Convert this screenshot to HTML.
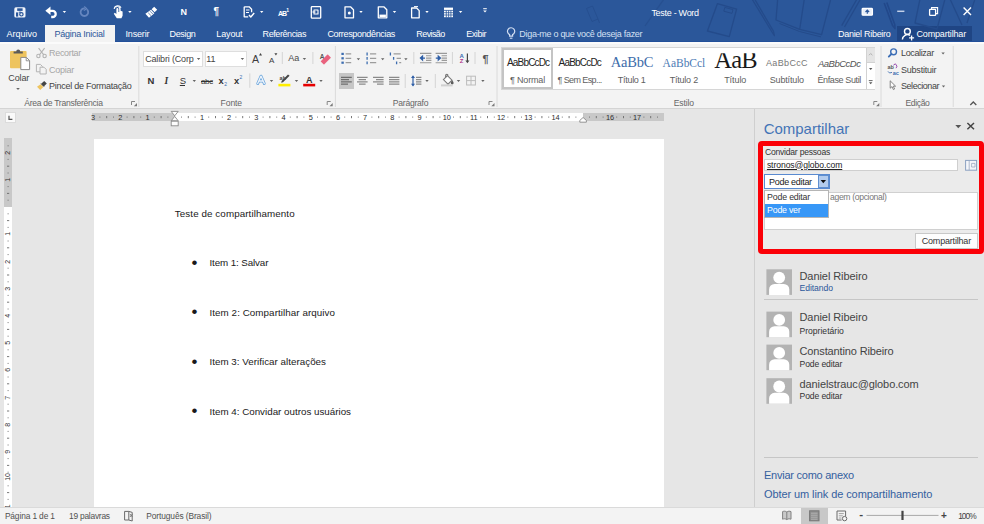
<!DOCTYPE html>
<html lang="pt-BR">
<head>
<meta charset="utf-8">
<title>Teste - Word</title>
<style>
html,body{margin:0;padding:0;}
body{width:984px;height:524px;overflow:hidden;position:relative;background:#e6e6e6;font-family:"Liberation Sans",sans-serif;}
.b{position:absolute;box-sizing:border-box;}
.t{position:absolute;white-space:nowrap;line-height:normal;z-index:3;}
svg{position:absolute;left:0;top:0;z-index:2;}
</style>
</head>
<body>
<!-- title bar + tab row -->
<div class="b" style="left:0;top:0;width:984px;height:42px;background:#2b579a;"></div>
<div class="b" style="left:44.6px;top:25px;width:70.4px;height:18px;background:#f3f3f3;"></div>
<div class="b" style="left:897px;top:26px;width:75px;height:16px;background:#1f4584;"></div>
<div class="b" style="left:0;top:41px;width:984px;height:1px;background:#23509a;"></div>
<div class="b" style="left:44.6px;top:41px;width:70.4px;height:1px;background:#f3f3f3;"></div>
<!-- ribbon -->
<div class="b" style="left:0;top:42px;width:984px;height:66.5px;background:#f3f3f3;border-bottom:1px solid #d4d4d4;"></div>
<div class="b" style="left:0;top:42px;width:984px;height:1.5px;background:#fbfbfb;"></div>
<!-- font boxes -->
<div class="b" style="left:143.4px;top:51.4px;width:59.5px;height:15.6px;background:#fff;border:1px solid #dedede;"></div>
<div class="b" style="left:204.7px;top:51.4px;width:42.3px;height:15.6px;background:#fff;border:1px solid #dedede;"></div>
<!-- align-left selected -->
<div class="b" style="left:338.7px;top:73px;width:15.7px;height:16px;background:#c6c6c6;"></div>
<!-- styles gallery -->
<div class="b" style="left:501.4px;top:46.8px;width:374px;height:43px;background:#fff;border:1px solid #d6d6d6;"></div>
<div class="b" style="left:502px;top:48.2px;width:51.3px;height:40.4px;border:2px solid #c4c4c4;"></div>
<div class="b" style="left:866.2px;top:47.6px;width:9.2px;height:14.6px;background:#e4e4e4;border-left:1px solid #d2d2d2;"></div>
<div class="b" style="left:866.2px;top:62px;width:9.2px;height:13.6px;background:#fff;border:1px solid #d2d2d2;border-right:0;"></div>
<div class="b" style="left:866.2px;top:75.4px;width:9.2px;height:14px;background:#fff;border-left:1px solid #d2d2d2;"></div>
<!-- document page -->
<div class="b" style="left:94.4px;top:139.2px;width:570px;height:368px;background:#fff;"></div>
<!-- horizontal ruler -->
<div class="b" style="left:92.4px;top:113.2px;width:82.3px;height:7.4px;background:#c8c8c8;"></div>
<div class="b" style="left:174.7px;top:113.2px;width:408px;height:7.4px;background:#fff;"></div>
<div class="b" style="left:582.7px;top:113.2px;width:81.7px;height:7.4px;background:#c8c8c8;"></div>
<!-- tab selector -->
<div class="b" style="left:5px;top:112.3px;width:11.3px;height:11px;background:#fafafa;border:1px solid #dcdcdc;"></div>
<!-- vertical ruler -->
<div class="b" style="left:4.2px;top:138.2px;width:7.7px;height:69px;background:#c8c8c8;"></div>
<div class="b" style="left:4.2px;top:207.2px;width:7.7px;height:300.4px;background:#fff;"></div>
<!-- share pane -->
<div class="b" style="left:753.6px;top:109px;width:231px;height:399px;background:#e6e6e6;border-left:1px solid #cfcfcf;"></div>
<div class="b" style="left:757.5px;top:140.5px;width:226.5px;height:113px;border:5.500px solid #fb0007;border-radius:4px;background:#ebebeb;"></div>
<div class="b" style="left:764.4px;top:158.9px;width:194px;height:12.2px;background:#fff;border:1px solid #cfcfcf;"></div>
<div class="b" style="left:764.3px;top:174.2px;width:65.4px;height:15px;background:#fff;border:1px solid #5a8ad0;"></div>
<div class="b" style="left:817.8px;top:175.2px;width:10.9px;height:13px;background:#b3ccee;border:1px solid #5f8fd0;"></div>
<div class="b" style="left:764.4px;top:191.8px;width:213.2px;height:38px;background:#fff;border:1px solid #d0d0d0;"></div>
<div class="b" style="left:914.7px;top:233px;width:63px;height:16.2px;background:#fdfdfd;border:1px solid #c8c8c8;"></div>
<!-- dropdown list -->
<div class="b" style="left:764.4px;top:190px;width:64.8px;height:27.6px;background:#fff;border:1px solid #b5b5b5;z-index:4;"></div>
<div class="b" style="left:765.2px;top:204px;width:63.2px;height:12.9px;background:#3797f7;z-index:4;"></div>
<!-- separators in pane -->
<div class="b" style="left:764.4px;top:298.6px;width:213.2px;height:1px;background:#c6c6c6;"></div>
<div class="b" style="left:763.6px;top:457.3px;width:214.4px;height:1px;background:#c6c6c6;"></div>
<!-- status bar -->
<div class="b" style="left:0;top:507px;width:984px;height:17px;background:#f3f3f3;border-top:1px solid #dadada;"></div>
<div class="b" style="left:800.7px;top:507.5px;width:27.3px;height:16.5px;background:#c8c8c8;"></div>

<svg width="984" height="524" viewBox="0 0 984 524">
<!-- title bar faint decoration -->
<g fill="none" stroke="#244b8b" stroke-width="1.300" stroke-linejoin="round">
<path d="M717.400 3.700l19.200 5.400l-7.300 27.500l-21.900-5.600z"/>
<path d="M724.800 7.400l8.200 2.200l-1 3.800l-8.200-2.200z" stroke-width="1"/>
<path d="M752-1l20 33l2.400 3.600l-1-4.400l-18.800-32.200"/>
<path d="M777.700-1l-1.700 21l23.700 9.300l4.600-30.300M804.300-1l-4.600 30.300l21.900 5.400l9.200-35.700"/>
<path d="M779.500 23.500l20 8l21.500 5.400" stroke-width="1"/>
<path d="M857-1l-15.300 26.600M860.500-1l-16 28"/>
<path d="M884.200 3l8.400 22.600l2.400 3l-.200-3.800l-8-22.400" stroke="#22488a" stroke-width="1.600"/>
<path d="M920-1l-5 24l22 6l8-30" />
<path d="M950-1l12 26M975-1l-8 24"/>
<path d="M586.500 8.500l6-2.500l5.500 13l-6 2.500zM598 19l1.500 4" stroke-width="1" opacity="0.700"/>
<path d="M664-1l-19 27" opacity="0.600"/>
</g>
<!-- QAT icons -->
<g fill="none" stroke="#fff" stroke-width="1.5" stroke-linejoin="round" stroke-linecap="round">
<!-- save/sync -->
<rect x="14.300" y="7.300" width="11.200" height="10.200" rx="1.600" fill="#f2f5fb" stroke="none"/>
<rect x="17.200" y="8.300" width="5.400" height="2.600" fill="#2b579a" stroke="none"/>
<rect x="16" y="12.400" width="2.200" height="4.200" fill="#2b579a" stroke="none"/>
<circle cx="21.400" cy="14.300" r="1.700" stroke="#2b579a" stroke-width="1.200"/>
<path d="M19.200 12.200h1.600" stroke="#2b579a" stroke-width="1"/>
<!-- undo -->
<path d="M45.300 10.800l5.200-4.200v8.400z" fill="#fff" stroke="none"/>
<path d="M50 10.800h2.600a3.100 3.100 0 0 1 0 6.200h-1.400" stroke-width="2.300" stroke-linecap="butt"/>
<!-- redo dim -->
<path d="M87.5 10 a3.8 3.8 0 1 1 -3.5 -1.6" stroke="#6586bf" stroke-width="1.800"/>
<path d="M84.5 6.8 l2.3 1.9 l-2.6 1.6" stroke="#6586bf" stroke-width="1.2"/>
</g>
<g fill="#fff">
<!-- touch hand -->
<path d="M116 7.2 a2.6 2.6 0 0 1 4.6 1.6 v2 l2 .8 v4.2 l-1.2 2.4 h-4.6 l-3 -4.4 l1 -1 l1.6 1.2 v-5 a1 1 0 0 1 2 0 v3 h.8 v-3.4 a1.8 1.8 0 0 0 -3.4 -.6z"/>
<path d="M114.2 8.8 a3.6 3.6 0 0 1 6.8 -1" fill="none" stroke="#fff" stroke-width="1.2"/>
<!-- format painter -->
<path d="M154.200 6.800l3 3l-2.600 2.400l-3-3z"/>
<path d="M151 9.800l3.400 3.400l-5.400 4.600l-3.600-4z"/>
<path d="M148.200 12.800l2.800 2.800M150 11.200l2.800 2.800" stroke="#2b579a" stroke-width="0.700"/>
<!-- dropdown arrows -->
<path d="M62.7 11h3.4l-1.7 2z"/>
<path d="M128.2 11h3.4l-1.7 2z"/>
<path d="M260 11h3.4l-1.7 2z"/>
<path d="M359.3 11h3.4l-1.7 2z"/>
<path d="M392.8 11h3.4l-1.7 2z"/>
<path d="M425.3 11h3.4l-1.7 2z"/>
<path d="M458.9 11h3.4l-1.7 2z"/>
<path d="M483.2 8.2h3.6v1h-3.6z"/><path d="M483.2 10.4h3.6l-1.8 2.2z"/>
</g>
<g fill="none" stroke="#fff" stroke-width="1.3" stroke-linejoin="round">
<!-- doc with check -->
<path d="M244.2 6.8 h5 l2.4 2.4 v3 M244.2 6.8 v10 h4"/>
<path d="M246 10h3.5M246 12.5h3" stroke-width="1"/>
<path d="M249 15 l1.8 2 l3.4 -4" stroke-width="1.4"/>
<!-- box icon -->
<rect x="311.3" y="6.6" width="9.4" height="11.6" rx="0.8"/>
<rect x="314" y="10" width="4" height="4" stroke-width="1.1"/>
<path d="M312.5 12h3" stroke-width="1.1"/>
<!-- doc icons -->
<path d="M345 6.8 h5.5 l3 3 v8 h-8.5z"/>
<circle cx="349.3" cy="13" r="1.5" fill="#fff" stroke="none"/>
<path d="M378.3 6.8 h5.5 l3 3 v8 h-8.5z"/>
<path d="M379.5 15.8 h6.4" stroke-width="2.4"/>
<path d="M411.6 8 h5 l2.6 2.6 v7.2 h-7.6z"/>
<path d="M414 6.6 h4" stroke-width="1"/>
<!-- table -->
<rect x="444" y="7.6" width="9" height="9.6" fill="#fff" stroke="none"/>
</g>
<g stroke="#2b579a" stroke-width="0.8">
<path d="M444 10.4h9M444 12.7h9M444 15h9M446.3 10.4v7M448.6 10.4v7M450.9 10.4v7"/>
</g>
<text x="286.3" y="11.5" font-family="Liberation Sans, sans-serif" font-size="5" font-weight="bold" fill="#fff">1</text>
<!-- window controls -->
<g fill="none" stroke="#fff" stroke-width="1.3">
<rect x="862.200" y="8.400" width="10.200" height="6.800" rx="0.800" fill="#e8eef8"/>
<path d="M867.300 10.200v3.600M865.500 12l1.800-1.800l1.800 1.800" stroke="#2b579a" stroke-width="1.200"/>
<path d="M897.200 11.300h7.200" stroke="#c3d0e8" stroke-width="1.500"/>
<rect x="929.6" y="9.4" width="6" height="6" rx="0.6"/>
<path d="M931.6 9.4v-1.8h6v6h-2" stroke-width="1.1"/>
<path d="M963.6 7.6l7.4 7.4M971 7.6l-7.4 7.4" stroke-width="1.4"/>
</g>
<!-- lightbulb -->
<g fill="none" stroke="#d5e0f3" stroke-width="1.2">
<path d="M509.6 36.2 v-1.6 a3.6 3.6 0 1 1 3 0 v1.6z"/>
<path d="M509.8 38.2h2.6" stroke-width="1.1"/>
</g>
<!-- share person icon -->
<g fill="none" stroke="#fff" stroke-width="1.4">
<circle cx="907.4" cy="31.4" r="2.9"/>
<path d="M902.4 39.6 a5 5 0 0 1 7.6 -4.2"/>
<path d="M911.6 35.4v5M909.1 37.9h5" stroke-width="1.3"/>
</g>
<!-- ===== ribbon: group separators ===== -->
<g stroke="#dadada" stroke-width="1">
<path d="M138.8 46v61M335.4 46v61M497 46v61M881 46v61M953.2 46v61"/>
<path d="M249.8 73.4v14.4M282.3 52v12M312.9 52v12M413.8 52v12M452.4 52v12M475 52v12M405.2 74v14M435.3 74v14" stroke="#d4d4d4"/>
</g>
<!-- dialog launchers -->
<g fill="none" stroke="#7a7a7a" stroke-width="0.9">
<path d="M131.5 105v-3.5h3.5M327.2 105v-3.5h3.5M489 105v-3.5h3.5M873.8 105v-3.5h3.5"/>
</g>
<g fill="#7a7a7a"><path d="M137 106.2h-3.2l3.2-3.2zM332.7 106.2h-3.2l3.2-3.2zM494.5 106.2h-3.2l3.2-3.2zM879.3 106.2h-3.2l3.2-3.2z"/></g>
<!-- collapse chevron -->
<path d="M970.3 105l3-3l3 3" fill="none" stroke="#555" stroke-width="1.3"/>
<!-- clipboard -->
<rect x="10" y="51" width="16.6" height="17.2" rx="1" fill="#eec45f"/>
<path d="M13.6 53.4 v-2 h2.6 a2 2 0 0 1 4 0 h2.6 v2z" fill="#5a5a5a"/>
<path d="M20.8 57.4 h5.6 l3.2 3.2 v9 h-8.8z" fill="#fff" stroke="#8a8a8a" stroke-width="1"/>
<path d="M26.2 57.6 v3.2 h3.2" fill="none" stroke="#8a8a8a" stroke-width="0.9"/>
<path d="M16.2 88h3.6l-1.8 2.1z" fill="#666"/>
<!-- scissors (disabled) -->
<g fill="none" stroke="#b4b4b4" stroke-width="1.1">
<path d="M38.6 48.2l5.4 7M44.6 48.2l-5.4 7"/>
<circle cx="38.4" cy="56" r="1.7"/><circle cx="44.6" cy="56" r="1.7"/>
</g>
<!-- copy (disabled) -->
<g fill="#f3f3f3" stroke="#b4b4b4" stroke-width="1">
<path d="M36.4 64.4h4l2 2v5.4h-6z"/>
<path d="M40 67.2h4l2.2 2.2v4.6h-6.2z"/>
</g>
<!-- format painter -->
<path d="M44.2 81l2.6 2.4l-3 3l-2.6-2.6z" fill="#444"/>
<path d="M40.6 84.2l2.8 2.8l-3.2 3l-3.2-3.2z" fill="#eec45f"/>
<path d="M41 83.6l3 3" stroke="#444" stroke-width="1"/>
<!-- font combos arrows -->
<g fill="#666">
<path d="M196.9 58h3.4l-1.7 2zM240.7 58h3.4l-1.7 2z"/>
<path d="M192.6 80h3.4l-1.7 2z"/>
<path d="M302.7 58h3.4l-1.7 2z"/>
<path d="M269.8 80h3.4l-1.7 2zM294.8 80h3.4l-1.7 2zM319.3 80h3.4l-1.7 2z"/>
<path d="M356.7 58.2h3.4l-1.7 2zM381 58.2h3.4l-1.7 2zM404.2 58.2h3.4l-1.7 2z"/>
<path d="M425.3 80h3.4l-1.7 2zM456.8 80h3.4l-1.7 2zM481.2 80h3.4l-1.7 2z"/>
<path d="M941.4 52.4h3.4l-1.7 2zM941.8 85.4h3.4l-1.7 2z"/>
</g>
<!-- grow / shrink font markers -->
<path d="M259 55.400h3l-1.500-2.300z" fill="#444"/>
<path d="M274.400 53.200h3l-1.500 2.300z" fill="#444"/>
<!-- subscript / superscript marks -->
<text x="224.2" y="86" font-family="Liberation Sans, sans-serif" font-size="5" fill="#3c6db0">2</text>
<text x="239.6" y="79" font-family="Liberation Sans, sans-serif" font-size="5" fill="#3c6db0">2</text>
<!-- clear formatting -->
<text x="319.8" y="58.6" font-family="Liberation Sans, sans-serif" font-size="6.5" font-weight="bold" fill="#555">A</text>
<rect x="-2.400" y="-5" width="4.800" height="10" rx="0.600" transform="translate(325.800 59.500) rotate(45)" fill="#e9627e"/>
<!-- text effects A -->
<path d="M257.700 83.600l3.300-7.500l3.300 7.500M259.200 81h3.600" fill="none" stroke="#6aa5dc" stroke-width="2.800" stroke-linejoin="round" stroke-linecap="round"/>
<path d="M257.700 83.600l3.300-7.500l3.300 7.500M259.200 81h3.600" fill="none" stroke="#eef4fb" stroke-width="1.300" stroke-linejoin="round" stroke-linecap="round"/>
<!-- highlighter -->
<rect x="278.4" y="83.8" width="12" height="2.6" fill="#ffee00"/>
<path d="M289.6 75.8l-6.6 6.4l-1.8.6l.4-1.8l6.4-6.4z" fill="#444"/>
<text x="279.6" y="80" font-family="Liberation Sans, sans-serif" font-size="5.5" font-weight="bold" fill="#444">ab</text>
<!-- font color bar -->
<rect x="303.2" y="83.8" width="12" height="2.6" fill="#e60000"/>
<!-- bullets -->
<g fill="#3c6db0"><rect x="341.4" y="52.8" width="2.4" height="2.2"/><rect x="341.4" y="57.2" width="2.4" height="2.2"/><rect x="341.4" y="61.6" width="2.4" height="2.2"/></g>
<g stroke="#9c9c9c" stroke-width="1.2"><path d="M345.6 53.9h5.6M345.6 58.3h5.6M345.6 62.7h5.6"/>
<path d="M370 53.9h6.2M370 58.3h6.2M370 62.7h6.2"/>
<path d="M393.6 53.9h7M396.6 58.3h4.4M399.2 62.7h2"/></g>
<g stroke="#3c6db0" stroke-width="1.3"><path d="M367.1 52.6v2.8M367.1 57v2.8M367.1 61.4v2.8"/>
<path d="M390.4 52.6v2.8M393.6 57v2.8M396.6 61.4v2.8" /></g>
<!-- indent icons -->
<g stroke="#9a9a9a" stroke-width="1.1">
<path d="M420 53.4h11.4M420 62.8h11.4M426 55.8h5.4M426 58.1h5.4M426 60.4h5.4"/>
<path d="M435.6 53.4h11.4M435.6 62.8h11.4M441.6 55.8h5.4M441.6 58.1h5.4M441.6 60.4h5.4"/>
</g>
<path d="M425 58.100h-3.600M422.600 56l-2.300 2.100l2.300 2.100z" fill="#2e5ea6" stroke="#2e5ea6" stroke-width="1.100"/>
<path d="M435.800 58.100h3.600M438.200 56l2.300 2.100l-2.300 2.100z" fill="#2e5ea6" stroke="#2e5ea6" stroke-width="1.100"/>
<!-- sort -->
<text x="459.6" y="57.6" font-family="Liberation Sans, sans-serif" font-size="6" font-weight="bold" fill="#3c6db0">A</text>
<text x="459.8" y="63.4" font-family="Liberation Sans, sans-serif" font-size="6" font-weight="bold" fill="#b0358c">Z</text>
<path d="M467.4 53.6v7.6" stroke="#444" stroke-width="1.2"/><path d="M465.4 60.4h4l-2 2.8z" fill="#444"/>
<!-- alignment icons -->
<g stroke="#8a8a8a" stroke-width="1.2">
<path d="M341 77.3h10.8M341 79.6h8M341 81.9h10.8M341 84.2h7" stroke="#6e6e6e"/>
<path d="M357 77.3h10.6M358.6 79.6h7.4M357 81.9h10.6M359 84.2h6.6"/>
<path d="M373 77.3h10.6M376 79.6h7.6M373 81.9h10.6M377 84.2h6.6"/>
<path d="M389 77.3h10.4M389 79.6h10.4M389 81.9h10.4M389 84.2h10.4"/>
<path d="M416 77.3h5.4M416 79.6h5.4M416 81.9h5.4M416 84.2h5.4"/>
</g>
<!-- line spacing arrows -->
<path d="M413 76.4v9" stroke="#2e5ea6" stroke-width="1.2"/>
<path d="M411 78h4l-2-2.8zM411 83.8h4l-2 2.8z" fill="#2e5ea6"/>
<!-- shading bucket -->
<g fill="none" stroke="#7a7a7a" stroke-width="1.1">
<path d="M443.4 79.6l4-4l4.6 4.6l-4 4z" fill="#fff"/>
<path d="M445.6 77.4v-1.8a1.2 1.2 0 0 1 2.4 0"/>
</g>
<path d="M452.2 80.2c.9 1.3 1.4 2.1 1.4 2.8a1.4 1.4 0 0 1-2.8 0c0-.7.5-1.5 1.400-2.8z" fill="#5a5a5a"/>
<rect x="441" y="84.4" width="11.6" height="2" fill="#d0d0d0"/>
<!-- borders -->
<g fill="none" stroke="#bcbcbc" stroke-width="1"><rect x="466.6" y="76.2" width="8.8" height="8.8"/><path d="M471 76.2v8.8M466.6 80.6h8.8"/></g>
<!-- gallery scroll arrows -->
<path d="M869 55.2l1.7-1.7l1.700 1.700" fill="none" stroke="#b0b0b0" stroke-width="1"/>
<path d="M869 68h3.400l-1.700 2z" fill="#555"/>
<path d="M868.800 80.600h3.800" stroke="#555" stroke-width="0.9"/><path d="M869 82.200h3.400l-1.700 2z" fill="#555"/>
<!-- find -->
<circle cx="893.600" cy="51.800" r="2.900" fill="none" stroke="#3b6db5" stroke-width="1.400"/>
<path d="M891.400 54l-2.600 2.600" stroke="#3b6db5" stroke-width="1.800" stroke-linecap="round"/>
<!-- replace -->
<text x="887.400" y="69.200" font-family="Liberation Sans, sans-serif" font-size="5.500" font-weight="bold" fill="#555">ab</text>
<text x="892.800" y="74.600" font-family="Liberation Sans, sans-serif" font-size="5.500" font-weight="bold" fill="#3c6db0">ac</text>
<path d="M893.400 65.200l2-1.400l1.600 2.400l-1 2" fill="none" stroke="#9a4fb0" stroke-width="1"/>
<path d="M888 71.400l1.600 1.600l2.400-.6" fill="none" stroke="#3c6db0" stroke-width="0.900"/>
<!-- select cursor -->
<path d="M890.200 80.800v7.400l1.800-1.600l1.400 3l1.200-.6l-1.400-2.800h2.400z" fill="#fdfdfd" stroke="#777" stroke-width="0.900" stroke-linejoin="round"/>
<!-- tab selector L -->
<path d="M9 115.8v3.600h3.400" fill="none" stroke="#555" stroke-width="1.200"/>
<!-- indent markers -->
<g fill="#fdfdfd" stroke="#8a8a8a" stroke-width="0.900">
<path d="M171.200 111.400h7l-3.500 4.400z"/>
<path d="M171.200 120.800l3.500-4.400l3.500 4.400z"/>
<rect x="171.200" y="121.200" width="7" height="4.600"/>
<path d="M579.800 122.200v-1.800l3.300-2.900l3.300 2.900v1.800z"/>
</g>
<!-- avatars -->
<rect x="766.4" y="269.3" width="25.6" height="25.6" fill="#b3b3b3"/>
<circle cx="779.2" cy="277.6" r="5.9" fill="#fff"/>
<path d="M769.1 294.9v-5.500a5.500 5.500 0 0 1 5.500-5.500h9.200a5.500 5.500 0 0 1 5.500 5.500v5.500z" fill="#fff"/>
<rect x="766.4" y="311.6" width="25.6" height="25.6" fill="#b3b3b3"/>
<circle cx="779.2" cy="319.9" r="5.9" fill="#fff"/>
<path d="M769.1 337.2v-5.500a5.500 5.500 0 0 1 5.500-5.500h9.200a5.500 5.500 0 0 1 5.500 5.500v5.500z" fill="#fff"/>
<rect x="766.4" y="344.6" width="25.6" height="25.6" fill="#b3b3b3"/>
<circle cx="779.2" cy="352.9" r="5.9" fill="#fff"/>
<path d="M769.1 370.2v-5.500a5.500 5.500 0 0 1 5.500-5.500h9.200a5.500 5.500 0 0 1 5.500 5.500v5.500z" fill="#fff"/>
<rect x="766.4" y="378.2" width="25.6" height="25.6" fill="#b3b3b3"/>
<circle cx="779.2" cy="386.5" r="5.9" fill="#fff"/>
<path d="M769.1 403.8v-5.500a5.500 5.500 0 0 1 5.500-5.500h9.200a5.500 5.500 0 0 1 5.500 5.500v5.500z" fill="#fff"/>
<!-- pane header icons -->
<path d="M955.300 125h6l-3 3.200z" fill="#555"/>
<path d="M967.400 123l6.600 6.200M974 123l-6.600 6.200" stroke="#444" stroke-width="1.500" fill="none"/>
<!-- address book -->
<rect x="965.600" y="160.400" width="11" height="9.800" fill="#f4f6fa" stroke="#8aa0c0" stroke-width="1"/>
<path d="M969.200 160.400v9.800M971.600 163.400h3.400v3.600h-3.400z" fill="none" stroke="#9aa8bf" stroke-width="0.800"/>
<!-- combo arrow -->
<path d="M820.600 180h5.400l-2.700 3.200z" fill="#111"/>
<!-- status bar icons -->
<g fill="none" stroke="#6a6a6a" stroke-width="1">
<path d="M124.600 511.400h4.200v8.600h-4.200zM128.800 511.400l3.400 1v8.600l-3.400-1"/>
<path d="M130 514l2.400 3M132.400 514l-2.400 3" stroke-width="0.800"/>
<path d="M782.600 511.600c1.400-.6 2.800-.6 4.200.4c1.400-1 2.800-1 4.200-.4v7.600c-1.400-.6-2.800-.6-4.200.4c-1.400-1-2.800-1-4.200-.4zM786.800 512v7.600" fill="#c9c9c9" stroke="#808080"/>
<rect x="809.600" y="510.800" width="9.400" height="10" fill="#8e8e8e" stroke="#777"/>
<path d="M837 511h8.600v5M837 511v9h4.600"/>
<path d="M838.800 513.600h5M838.800 515.800h4M838.800 518h2.600" stroke-width="0.800" stroke="#8a8a8a"/>
<circle cx="844.600" cy="518.600" r="2.200" fill="#f3f3f3"/>
</g>
<path d="M811 513.200h6.600M811 515.200h6.600M811 517.200h6.600M811 519.200h6.600" stroke="#bdbdbd" stroke-width="0.800"/>
<path d="M866.500 515.400h72" stroke="#a8a8a8" stroke-width="1"/>
<rect x="901.400" y="510.800" width="2.200" height="9.200" fill="#444"/>
<path d="M99.9 116.6v1M106.7 116v2.2M113.5 116.6v1M127.1 116.6v1M133.9 116v2.2M140.7 116.6v1M154.3 116.6v1M161.1 116v2.2M167.9 116.6v1M181.5 116.6v1M188.3 116v2.2M195.1 116.6v1M208.7 116.6v1M215.5 116v2.2M222.3 116.6v1M235.9 116.6v1M242.7 116v2.2M249.5 116.6v1M263.1 116.6v1M269.9 116v2.2M276.7 116.6v1M290.3 116.6v1M297.1 116v2.2M303.9 116.6v1M317.5 116.6v1M324.3 116v2.2M331.1 116.6v1M344.7 116.6v1M351.5 116v2.2M358.3 116.6v1M371.9 116.6v1M378.7 116v2.2M385.5 116.6v1M399.1 116.6v1M405.9 116v2.2M412.7 116.6v1M426.3 116.6v1M433.1 116v2.2M439.9 116.6v1M453.5 116.6v1M460.3 116v2.2M467.1 116.6v1M480.7 116.6v1M487.5 116v2.2M494.3 116.6v1M507.9 116.6v1M514.7 116v2.2M521.5 116.6v1M535.1 116.6v1M541.9 116v2.2M548.7 116.6v1M562.3 116.6v1M569.1 116v2.2M575.9 116.6v1M589.5 116.6v1M596.3 116v2.2M603.1 116.6v1M616.7 116.6v1M623.5 116v2.2M630.3 116.6v1M643.9 116.6v1M650.7 116v2.2M657.5 116.6v1" stroke="#6a6a6a" stroke-width="0.9" fill="none"/><path d="M7.6 145.8h1M7.6 159.4h1M7 166.2h2.2M7.6 173.0h1M7.6 186.6h1M7 193.4h2.2M7.6 200.2h1M7.6 213.8h1M7 220.6h2.2M7.6 227.4h1M7.6 241.0h1M7 247.8h2.2M7.6 254.6h1M7.6 268.2h1M7 275.0h2.2M7.6 281.8h1M7.6 295.4h1M7 302.2h2.2M7.6 309.0h1M7.6 322.6h1M7 329.4h2.2M7.6 336.2h1M7.6 349.8h1M7 356.6h2.2M7.6 363.4h1M7.6 377.0h1M7 383.8h2.2M7.6 390.6h1M7.6 404.2h1M7 411.0h2.2M7.6 417.8h1M7.6 431.4h1M7 438.2h2.2M7.6 445.0h1M7.6 458.6h1M7 465.4h2.2M7.6 472.2h1M7.6 485.8h1M7 492.6h2.2M7.6 499.4h1" stroke="#6a6a6a" stroke-width="0.9" fill="none"/>
</svg>
<div class="b" style="left:0;top:139px;width:20px;height:368.4px;overflow:hidden;z-index:3;"><span class="t" style="left:4.3px;top:364.5px;font-size:7px;color:#3a3a3a;transform:rotate(-90deg);transform-origin:3.9px 3.83px;">11</span></div>
<span class="t" style="left:651.4px;top:7.76px;font-size:9px;color:#fff;font-family:'Liberation Sans', sans-serif;letter-spacing:-0.288px;">Teste - Word</span>
<span class="t" style="left:6.5px;top:28.86px;font-size:9px;color:#fff;font-family:'Liberation Sans', sans-serif;letter-spacing:-0.002px;">Arquivo</span>
<span class="t" style="left:125.5px;top:28.86px;font-size:9px;color:#fff;font-family:'Liberation Sans', sans-serif;letter-spacing:-0.174px;">Inserir</span>
<span class="t" style="left:169.5px;top:28.86px;font-size:9px;color:#fff;font-family:'Liberation Sans', sans-serif;letter-spacing:-0.336px;">Design</span>
<span class="t" style="left:216.3px;top:28.86px;font-size:9px;color:#fff;font-family:'Liberation Sans', sans-serif;letter-spacing:-0.139px;">Layout</span>
<span class="t" style="left:262.6px;top:28.86px;font-size:9px;color:#fff;font-family:'Liberation Sans', sans-serif;letter-spacing:-0.421px;">Referências</span>
<span class="t" style="left:327.4px;top:28.86px;font-size:9px;color:#fff;font-family:'Liberation Sans', sans-serif;letter-spacing:-0.340px;">Correspondências</span>
<span class="t" style="left:416.3px;top:28.86px;font-size:9px;color:#fff;font-family:'Liberation Sans', sans-serif;letter-spacing:-0.588px;">Revisão</span>
<span class="t" style="left:466.3px;top:28.86px;font-size:9px;color:#fff;font-family:'Liberation Sans', sans-serif;letter-spacing:-0.469px;">Exibir</span>
<span class="t" style="left:54.5px;top:28.86px;font-size:9px;color:#2b579a;font-family:'Liberation Sans', sans-serif;letter-spacing:-0.253px;">Página Inicial</span>
<span class="t" style="left:519.3px;top:28.86px;font-size:9px;color:#d5e0f3;font-family:'Liberation Sans', sans-serif;letter-spacing:-0.293px;">Diga-me o que você deseja fazer</span>
<span class="t" style="left:838.0px;top:28.86px;font-size:9px;color:#fff;font-family:'Liberation Sans', sans-serif;letter-spacing:-0.288px;">Daniel Ribeiro</span>
<span class="t" style="left:916.5px;top:28.86px;font-size:9px;color:#fff;font-family:'Liberation Sans', sans-serif;letter-spacing:-0.169px;">Compartilhar</span>
<span class="t" style="left:180.5px;top:7.16px;font-size:9px;color:#fff;font-family:'Liberation Sans', sans-serif;letter-spacing:0.500px;font-weight:bold;">N</span>
<span class="t" style="left:213.5px;top:6.35px;font-size:10px;color:#fff;font-family:'Liberation Sans', sans-serif;letter-spacing:1.238px;font-weight:bold;">¶</span>
<span class="t" style="left:278.0px;top:9.66px;font-size:7px;color:#fff;font-family:'Liberation Sans', sans-serif;letter-spacing:-1.062px;font-weight:bold;">AB</span>
<span class="t" style="left:8.3px;top:72.86px;font-size:9px;color:#444;font-family:'Liberation Sans', sans-serif;letter-spacing:-0.123px;">Colar</span>
<span class="t" style="left:49.0px;top:48.25px;font-size:9px;color:#a6a6a6;font-family:'Liberation Sans', sans-serif;letter-spacing:-0.314px;">Recortar</span>
<span class="t" style="left:49.0px;top:65.26px;font-size:9px;color:#a6a6a6;font-family:'Liberation Sans', sans-serif;letter-spacing:-0.253px;">Copiar</span>
<span class="t" style="left:49.0px;top:80.86px;font-size:9px;color:#444;font-family:'Liberation Sans', sans-serif;letter-spacing:-0.247px;">Pincel de Formatação</span>
<span class="t" style="left:24.2px;top:97.92px;font-size:8.6px;color:#666;font-family:'Liberation Sans', sans-serif;letter-spacing:-0.289px;">Área de Transferência</span>
<span class="t" style="left:145.2px;top:54.36px;font-size:9px;color:#444;font-family:'Liberation Sans', sans-serif;letter-spacing:-0.163px;">Calibri (Corp</span>
<span class="t" style="left:206.2px;top:54.36px;font-size:9px;color:#444;font-family:'Liberation Sans', sans-serif;letter-spacing:-0.072px;">11</span>
<span class="t" style="left:147.4px;top:75.20px;font-size:9.5px;color:#333;font-family:'Liberation Sans', sans-serif;letter-spacing:0.225px;font-weight:bold;">N</span>
<span class="t" style="left:164.5px;top:76.14px;font-size:9.5px;color:#333;font-family:'Liberation Serif', serif;letter-spacing:0.297px;font-style:italic;font-weight:bold;">I</span>
<span class="t" style="left:179.8px;top:75.00px;font-size:9.5px;color:#333;font-family:'Liberation Sans', sans-serif;letter-spacing:-1.144px;text-decoration:underline;">S</span>
<span class="t" style="left:201.0px;top:76.56px;font-size:8px;color:#333;font-family:'Liberation Sans', sans-serif;letter-spacing:-0.369px;text-decoration:line-through;">abc</span>
<span class="t" style="left:218.5px;top:75.29px;font-size:9.4px;color:#333;font-family:'Liberation Sans', sans-serif;letter-spacing:-0.419px;font-weight:bold;">x</span>
<span class="t" style="left:234.0px;top:75.29px;font-size:9.4px;color:#333;font-family:'Liberation Sans', sans-serif;letter-spacing:-0.419px;font-weight:bold;">x</span>
<span class="t" style="left:252.1px;top:53.21px;font-size:10.6px;color:#3c3c3c;font-family:'Liberation Sans', sans-serif;letter-spacing:0.522px;">A</span>
<span class="t" style="left:269.0px;top:55.56px;font-size:8px;color:#3c3c3c;font-family:'Liberation Sans', sans-serif;letter-spacing:0.656px;">A</span>
<span class="t" style="left:288.2px;top:53.36px;font-size:9px;color:#4a4a4a;font-family:'Liberation Sans', sans-serif;letter-spacing:0.092px;">Aa</span>
<span class="t" style="left:306.0px;top:75.06px;font-size:9px;color:#333;font-family:'Liberation Sans', sans-serif;letter-spacing:0.100px;font-weight:bold;">A</span>
<span class="t" style="left:220.6px;top:97.92px;font-size:8.6px;color:#666;font-family:'Liberation Sans', sans-serif;letter-spacing:-0.117px;">Fonte</span>
<span class="t" style="left:392.8px;top:97.92px;font-size:8.6px;color:#666;font-family:'Liberation Sans', sans-serif;letter-spacing:-0.250px;">Parágrafo</span>
<span class="t" style="left:482.4px;top:53.05px;font-size:11px;color:#555;font-family:'Liberation Sans', sans-serif;letter-spacing:0.975px;font-weight:bold;">¶</span>
<span class="t" style="left:673.7px;top:97.92px;font-size:8.6px;color:#666;font-family:'Liberation Sans', sans-serif;letter-spacing:-0.136px;">Estilo</span>
<span class="t" style="left:905.5px;top:98.02px;font-size:8.6px;color:#666;font-family:'Liberation Sans', sans-serif;letter-spacing:-0.397px;">Edição</span>
<span class="t" style="left:507.0px;top:57.25px;font-size:10px;color:#222;font-family:'Liberation Sans', sans-serif;letter-spacing:-0.826px;">AaBbCcDc</span>
<span class="t" style="left:510.0px;top:75.26px;font-size:9px;color:#606060;font-family:'Liberation Sans', sans-serif;letter-spacing:-0.168px;">¶ Normal</span>
<span class="t" style="left:558.6px;top:57.25px;font-size:10px;color:#222;font-family:'Liberation Sans', sans-serif;letter-spacing:-0.813px;">AaBbCcDc</span>
<span class="t" style="left:557.6px;top:75.26px;font-size:9px;color:#606060;font-family:'Liberation Sans', sans-serif;letter-spacing:-0.605px;">¶ Sem Esp...</span>
<span class="t" style="left:610.7px;top:54.38px;font-size:14.5px;color:#3d6caa;font-family:'Liberation Serif', serif;letter-spacing:-0.180px;">AaBbC</span>
<span class="t" style="left:617.8px;top:75.26px;font-size:9px;color:#606060;font-family:'Liberation Sans', sans-serif;letter-spacing:-0.289px;">Título 1</span>
<span class="t" style="left:662.6px;top:56.75px;font-size:11.5px;color:#4c7ab5;font-family:'Liberation Serif', serif;letter-spacing:-0.016px;">AaBbCcl</span>
<span class="t" style="left:669.7px;top:75.26px;font-size:9px;color:#606060;font-family:'Liberation Sans', sans-serif;letter-spacing:-0.214px;">Título 2</span>
<span class="t" style="left:714.2px;top:45.77px;font-size:24.5px;color:#1a1a1a;font-family:'Liberation Serif', serif;letter-spacing:-0.707px;clip-path:inset(7.5px 0 0 0);">AaB</span>
<span class="t" style="left:724.2px;top:75.26px;font-size:9px;color:#606060;font-family:'Liberation Sans', sans-serif;letter-spacing:-0.069px;">Título</span>
<span class="t" style="left:765.9px;top:58.45px;font-size:9px;color:#777;font-family:'Liberation Sans', sans-serif;letter-spacing:0.369px;">AaBbCcC</span>
<span class="t" style="left:769.7px;top:75.26px;font-size:9px;color:#606060;font-family:'Liberation Sans', sans-serif;letter-spacing:-0.148px;">Subtítulo</span>
<span class="t" style="left:818.0px;top:57.90px;font-size:9.5px;color:#555;font-family:'Liberation Sans', sans-serif;letter-spacing:-0.509px;font-style:italic;">AaBbCcDc</span>
<span class="t" style="left:817.4px;top:75.16px;font-size:9px;color:#606060;font-family:'Liberation Sans', sans-serif;letter-spacing:-0.369px;">Ênfase Sutil</span>
<span class="t" style="left:901.0px;top:48.16px;font-size:9px;color:#444;font-family:'Liberation Sans', sans-serif;letter-spacing:-0.359px;">Localizar</span>
<span class="t" style="left:901.0px;top:64.86px;font-size:9px;color:#444;font-family:'Liberation Sans', sans-serif;letter-spacing:-0.213px;">Substituir</span>
<span class="t" style="left:901.0px;top:81.06px;font-size:9px;color:#444;font-family:'Liberation Sans', sans-serif;letter-spacing:-0.453px;">Selecionar</span>
<span class="t" style="left:91.1px;top:113.20px;font-size:7.4px;color:#2e2e2e;font-family:'Liberation Sans', sans-serif;letter-spacing:-0.125px;">3</span>
<span class="t" style="left:118.3px;top:113.20px;font-size:7.4px;color:#2e2e2e;font-family:'Liberation Sans', sans-serif;letter-spacing:-0.125px;">2</span>
<span class="t" style="left:145.5px;top:113.20px;font-size:7.4px;color:#2e2e2e;font-family:'Liberation Sans', sans-serif;letter-spacing:-0.125px;">1</span>
<span class="t" style="left:199.9px;top:113.20px;font-size:7.4px;color:#2e2e2e;font-family:'Liberation Sans', sans-serif;letter-spacing:-0.125px;">1</span>
<span class="t" style="left:227.1px;top:113.20px;font-size:7.4px;color:#2e2e2e;font-family:'Liberation Sans', sans-serif;letter-spacing:-0.125px;">2</span>
<span class="t" style="left:254.3px;top:113.20px;font-size:7.4px;color:#2e2e2e;font-family:'Liberation Sans', sans-serif;letter-spacing:-0.125px;">3</span>
<span class="t" style="left:281.5px;top:113.20px;font-size:7.4px;color:#2e2e2e;font-family:'Liberation Sans', sans-serif;letter-spacing:-0.125px;">4</span>
<span class="t" style="left:308.7px;top:113.20px;font-size:7.4px;color:#2e2e2e;font-family:'Liberation Sans', sans-serif;letter-spacing:-0.125px;">5</span>
<span class="t" style="left:335.9px;top:113.20px;font-size:7.4px;color:#2e2e2e;font-family:'Liberation Sans', sans-serif;letter-spacing:-0.125px;">6</span>
<span class="t" style="left:363.1px;top:113.20px;font-size:7.4px;color:#2e2e2e;font-family:'Liberation Sans', sans-serif;letter-spacing:-0.125px;">7</span>
<span class="t" style="left:390.3px;top:113.20px;font-size:7.4px;color:#2e2e2e;font-family:'Liberation Sans', sans-serif;letter-spacing:-0.125px;">8</span>
<span class="t" style="left:417.5px;top:113.20px;font-size:7.4px;color:#2e2e2e;font-family:'Liberation Sans', sans-serif;letter-spacing:-0.125px;">9</span>
<span class="t" style="left:442.7px;top:113.20px;font-size:7.4px;color:#2e2e2e;font-family:'Liberation Sans', sans-serif;letter-spacing:-0.117px;">10</span>
<span class="t" style="left:469.9px;top:113.20px;font-size:7.4px;color:#2e2e2e;font-family:'Liberation Sans', sans-serif;letter-spacing:0.164px;">11</span>
<span class="t" style="left:497.1px;top:113.20px;font-size:7.4px;color:#2e2e2e;font-family:'Liberation Sans', sans-serif;letter-spacing:-0.117px;">12</span>
<span class="t" style="left:524.3px;top:113.20px;font-size:7.4px;color:#2e2e2e;font-family:'Liberation Sans', sans-serif;letter-spacing:-0.117px;">13</span>
<span class="t" style="left:551.5px;top:113.20px;font-size:7.4px;color:#2e2e2e;font-family:'Liberation Sans', sans-serif;letter-spacing:-0.117px;">14</span>
<span class="t" style="left:605.9px;top:113.20px;font-size:7.4px;color:#2e2e2e;font-family:'Liberation Sans', sans-serif;letter-spacing:-0.117px;">16</span>
<span class="t" style="left:633.1px;top:113.20px;font-size:7.4px;color:#2e2e2e;font-family:'Liberation Sans', sans-serif;letter-spacing:-0.117px;">17</span>
<span class="t" style="left:6.2px;top:148.76px;font-size:7px;color:#2e2e2e;font-family:'Liberation Sans', sans-serif;letter-spacing:0.000px;transform:rotate(-90deg);transform-origin:1.95px 3.83px;">2</span>
<span class="t" style="left:6.2px;top:175.97px;font-size:7px;color:#2e2e2e;font-family:'Liberation Sans', sans-serif;letter-spacing:0.000px;transform:rotate(-90deg);transform-origin:1.95px 3.83px;">1</span>
<span class="t" style="left:6.2px;top:230.36px;font-size:7px;color:#2e2e2e;font-family:'Liberation Sans', sans-serif;letter-spacing:0.000px;transform:rotate(-90deg);transform-origin:1.95px 3.83px;">1</span>
<span class="t" style="left:6.2px;top:257.56px;font-size:7px;color:#2e2e2e;font-family:'Liberation Sans', sans-serif;letter-spacing:0.000px;transform:rotate(-90deg);transform-origin:1.95px 3.83px;">2</span>
<span class="t" style="left:6.2px;top:284.77px;font-size:7px;color:#2e2e2e;font-family:'Liberation Sans', sans-serif;letter-spacing:0.000px;transform:rotate(-90deg);transform-origin:1.95px 3.83px;">3</span>
<span class="t" style="left:6.2px;top:311.97px;font-size:7px;color:#2e2e2e;font-family:'Liberation Sans', sans-serif;letter-spacing:0.000px;transform:rotate(-90deg);transform-origin:1.95px 3.83px;">4</span>
<span class="t" style="left:6.2px;top:339.17px;font-size:7px;color:#2e2e2e;font-family:'Liberation Sans', sans-serif;letter-spacing:0.000px;transform:rotate(-90deg);transform-origin:1.95px 3.83px;">5</span>
<span class="t" style="left:6.2px;top:366.37px;font-size:7px;color:#2e2e2e;font-family:'Liberation Sans', sans-serif;letter-spacing:0.000px;transform:rotate(-90deg);transform-origin:1.95px 3.83px;">6</span>
<span class="t" style="left:6.2px;top:393.56px;font-size:7px;color:#2e2e2e;font-family:'Liberation Sans', sans-serif;letter-spacing:0.000px;transform:rotate(-90deg);transform-origin:1.95px 3.83px;">7</span>
<span class="t" style="left:6.2px;top:420.77px;font-size:7px;color:#2e2e2e;font-family:'Liberation Sans', sans-serif;letter-spacing:0.000px;transform:rotate(-90deg);transform-origin:1.95px 3.83px;">8</span>
<span class="t" style="left:6.2px;top:447.96px;font-size:7px;color:#2e2e2e;font-family:'Liberation Sans', sans-serif;letter-spacing:0.000px;transform:rotate(-90deg);transform-origin:1.95px 3.83px;">9</span>
<span class="t" style="left:6.2px;top:475.17px;font-size:7px;color:#2e2e2e;font-family:'Liberation Sans', sans-serif;letter-spacing:0.000px;transform:rotate(-90deg);transform-origin:1.95px 3.83px;">10</span>
<span class="t" style="left:174.8px;top:208.13px;font-size:9.8px;color:#1a1a1a;font-family:'Liberation Sans', sans-serif;letter-spacing:0.091px;">Teste de compartilhamento</span>
<span class="t" style="left:209.5px;top:257.13px;font-size:9.8px;color:#1a1a1a;font-family:'Liberation Sans', sans-serif;letter-spacing:-0.117px;">Item 1: Salvar</span>
<span class="t" style="left:191.6px;top:252.62px;font-size:17px;color:#1a1a1a;font-family:'Liberation Sans', sans-serif;letter-spacing:0.000px;">•</span>
<span class="t" style="left:209.5px;top:306.73px;font-size:9.8px;color:#1a1a1a;font-family:'Liberation Sans', sans-serif;letter-spacing:0.068px;">Item 2: Compartilhar arquivo</span>
<span class="t" style="left:191.6px;top:302.22px;font-size:17px;color:#1a1a1a;font-family:'Liberation Sans', sans-serif;letter-spacing:0.000px;">•</span>
<span class="t" style="left:209.5px;top:356.13px;font-size:9.8px;color:#1a1a1a;font-family:'Liberation Sans', sans-serif;letter-spacing:0.018px;">Item 3: Verificar alterações</span>
<span class="t" style="left:191.6px;top:351.62px;font-size:17px;color:#1a1a1a;font-family:'Liberation Sans', sans-serif;letter-spacing:0.000px;">•</span>
<span class="t" style="left:209.5px;top:405.63px;font-size:9.8px;color:#1a1a1a;font-family:'Liberation Sans', sans-serif;letter-spacing:-0.002px;">Item 4: Convidar outros usuários</span>
<span class="t" style="left:191.6px;top:401.12px;font-size:17px;color:#1a1a1a;font-family:'Liberation Sans', sans-serif;letter-spacing:0.000px;">•</span>
<span class="t" style="left:763.7px;top:120.23px;font-size:15px;color:#4474b6;font-family:'Liberation Sans', sans-serif;letter-spacing:-0.023px;">Compartilhar</span>
<span class="t" style="left:765.0px;top:146.52px;font-size:8.6px;color:#333;font-family:'Liberation Sans', sans-serif;letter-spacing:-0.237px;">Convidar pessoas</span>
<span class="t" style="left:766.9px;top:159.62px;font-size:8.6px;color:#222;font-family:'Liberation Sans', sans-serif;letter-spacing:-0.068px;text-decoration:underline;">stronos@globo.com</span>
<span class="t" style="left:769.0px;top:176.66px;font-size:9px;color:#222;font-family:'Liberation Sans', sans-serif;letter-spacing:-0.295px;">Pode editar</span>
<span class="t" style="left:830.0px;top:192.02px;font-size:8.6px;color:#777;font-family:'Liberation Sans', sans-serif;letter-spacing:-0.335px;">agem (opcional)</span>
<span class="t" style="left:767.1px;top:191.84px;font-size:8.8px;color:#333;font-family:'Liberation Sans', sans-serif;letter-spacing:-0.191px;z-index:6;">Pode editar</span>
<span class="t" style="left:767.1px;top:205.24px;font-size:8.8px;color:#fff;font-family:'Liberation Sans', sans-serif;letter-spacing:-0.227px;z-index:6;">Pode ver</span>
<span class="t" style="left:921.7px;top:236.25px;font-size:9px;color:#333;font-family:'Liberation Sans', sans-serif;letter-spacing:-0.186px;">Compartilhar</span>
<span class="t" style="left:799.5px;top:269.85px;font-size:11px;color:#444;font-family:'Liberation Sans', sans-serif;letter-spacing:-0.071px;">Daniel Ribeiro</span>
<span class="t" style="left:799.5px;top:283.22px;font-size:8.6px;color:#2b579a;font-family:'Liberation Sans', sans-serif;letter-spacing:-0.055px;">Editando</span>
<span class="t" style="left:799.5px;top:311.05px;font-size:11px;color:#444;font-family:'Liberation Sans', sans-serif;letter-spacing:-0.071px;">Daniel Ribeiro</span>
<span class="t" style="left:799.5px;top:325.52px;font-size:8.6px;color:#333;font-family:'Liberation Sans', sans-serif;letter-spacing:-0.010px;">Proprietário</span>
<span class="t" style="left:799.5px;top:344.75px;font-size:11px;color:#444;font-family:'Liberation Sans', sans-serif;letter-spacing:-0.133px;">Constantino Ribeiro</span>
<span class="t" style="left:799.5px;top:358.52px;font-size:8.6px;color:#333;font-family:'Liberation Sans', sans-serif;letter-spacing:-0.106px;">Pode editar</span>
<span class="t" style="left:799.5px;top:377.65px;font-size:11px;color:#444;font-family:'Liberation Sans', sans-serif;letter-spacing:-0.097px;">danielstrauc@globo.com</span>
<span class="t" style="left:799.5px;top:391.22px;font-size:8.6px;color:#333;font-family:'Liberation Sans', sans-serif;letter-spacing:-0.106px;">Pode editar</span>
<span class="t" style="left:764.0px;top:468.85px;font-size:11px;color:#34609f;font-family:'Liberation Sans', sans-serif;letter-spacing:-0.245px;">Enviar como anexo</span>
<span class="t" style="left:764.0px;top:488.05px;font-size:11px;color:#34609f;font-family:'Liberation Sans', sans-serif;letter-spacing:-0.091px;">Obter um link de compartilhamento</span>
<span class="t" style="left:4.9px;top:511.20px;font-size:8.4px;color:#505050;font-family:'Liberation Sans', sans-serif;letter-spacing:-0.131px;">Página 1 de 1</span>
<span class="t" style="left:69.1px;top:511.20px;font-size:8.4px;color:#505050;font-family:'Liberation Sans', sans-serif;letter-spacing:-0.237px;">19 palavras</span>
<span class="t" style="left:146.3px;top:511.20px;font-size:8.4px;color:#505050;font-family:'Liberation Sans', sans-serif;letter-spacing:-0.107px;">Português (Brasil)</span>
<span class="t" style="left:958.2px;top:511.20px;font-size:8.4px;color:#444;font-family:'Liberation Sans', sans-serif;letter-spacing:-1.005px;">100%</span>
<span class="t" style="left:859.3px;top:508.19px;font-size:11.5px;color:#444;font-family:'Liberation Sans', sans-serif;letter-spacing:0.156px;font-weight:bold;">-</span>
<span class="t" style="left:941.0px;top:509.75px;font-size:10px;color:#444;font-family:'Liberation Sans', sans-serif;letter-spacing:-0.344px;font-weight:bold;">+</span>
</body>
</html>
